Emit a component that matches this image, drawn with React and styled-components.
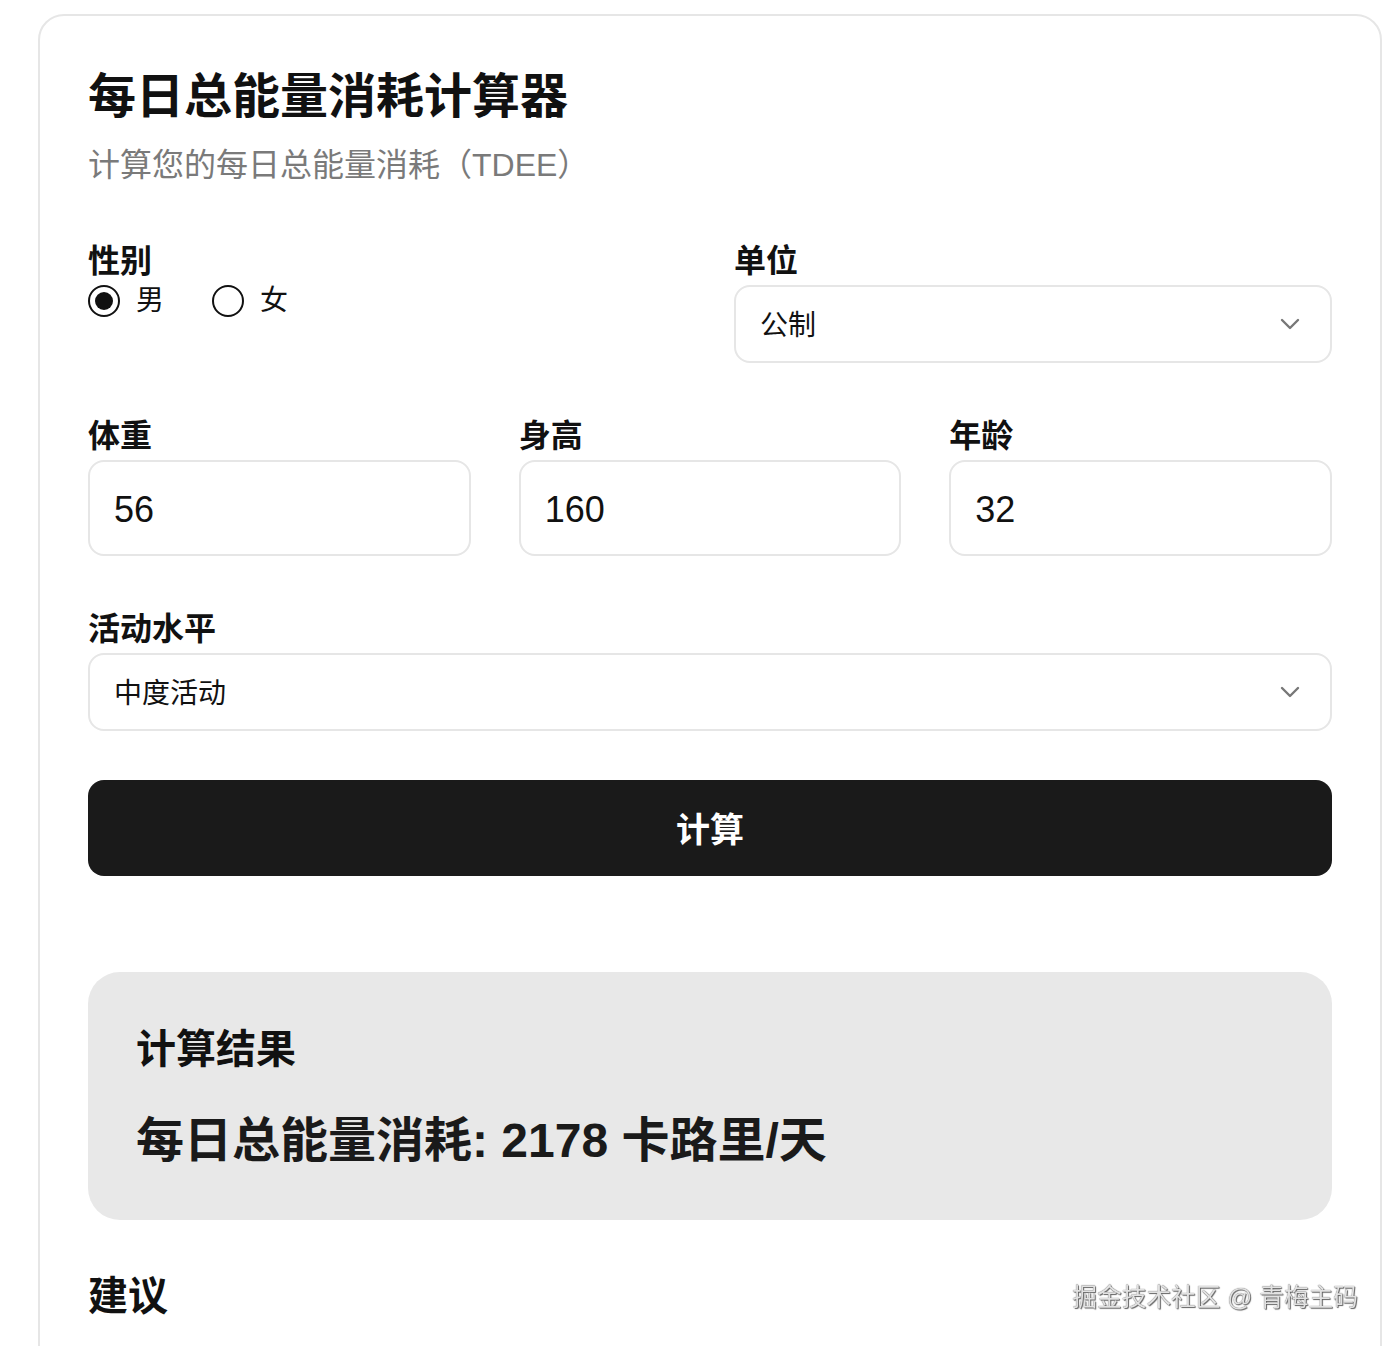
import React, { useState } from "react";
import styled, { createGlobalStyle } from "styled-components";

const Global = createGlobalStyle`
  html, body { margin: 0; padding: 0; background: #ffffff; }
  body {
    font-family: "Liberation Sans", "Noto Sans CJK SC", Arial, sans-serif;
    color: #111111;
  }
  * { box-sizing: border-box; }
`;

const Card = styled.div`
  margin: 14px 10px 0 38px;
  border: 2px solid #e6e6e6;
  border-radius: 26px;
  padding: 52px 48px 60px 48px;
  background: #fff;
  display: flex;
  flex-direction: column;
`;

const Title = styled.h1`
  margin: 0;
  font-size: 48px;
  line-height: 1.2;
  font-weight: 700;
  color: #111;
`;

const Subtitle = styled.p`
  margin: 15px 0 0 0;
  font-size: 32px;
  line-height: 48px;
  color: #7a7a7a;
  font-weight: 400;
`;

const Grid = styled.div`
  display: grid;
  grid-template-columns: repeat(${(p) => p.$cols}, 1fr);
  column-gap: 48px;
  margin-top: ${(p) => p.$top}px;
`;

const Field = styled.div`
  display: flex;
  flex-direction: column;
`;

const Label = styled.div`
  font-size: 32px;
  line-height: 48px;
  font-weight: 700;
  color: #111;
`;

const RadioRow = styled.div`
  display: flex;
  align-items: center;
  gap: 48px;
  height: 32px;
`;

const RadioItem = styled.label`
  display: flex;
  align-items: center;
  gap: 16px;
  font-size: 28px;
  line-height: 32px;
  color: #111;
  cursor: pointer;
`;

const RadioInput = styled.input`
  appearance: none;
  margin: 0;
  width: 32px;
  height: 32px;
  border: 2px solid #111;
  border-radius: 50%;
  display: grid;
  place-items: center;
  background: #fff;
  &::before {
    content: "";
    width: 18px;
    height: 18px;
    border-radius: 50%;
    background: #111;
    transform: scale(0);
  }
  &:checked::before {
    transform: scale(1);
  }
`;

const SelectWrap = styled.div`
  position: relative;
`;

const Select = styled.select`
  appearance: none;
  width: 100%;
  height: 78px;
  border: 2px solid #e6e6e6;
  border-radius: 16px;
  background: #fff;
  padding: 3px 60px 0 24px;
  font-family: inherit;
  font-size: 28px;
  color: #111;
  outline: none;
`;

const Chevron = styled.svg`
  position: absolute;
  right: 32px;
  top: 50%;
  transform: translateY(-50%);
  pointer-events: none;
`;

const Input = styled.input`
  width: 100%;
  height: 96px;
  border: 2px solid #e6e6e6;
  border-radius: 16px;
  padding: 4px 24px 0 24px;
  font-family: inherit;
  font-size: 36px;
  color: #111;
  background: #fff;
  outline: none;
`;

const Button = styled.button`
  margin-top: 49px;
  height: 96px;
  width: 100%;
  border: none;
  border-radius: 16px;
  background: #1a1a1a;
  color: #fff;
  font-family: inherit;
  font-size: 34px;
  font-weight: 700;
  cursor: pointer;
`;

const Result = styled.div`
  margin-top: 96px;
  background: #e8e8e8;
  border-radius: 32px;
  padding: 47px 48px 51px 48px;
`;

const ResultHeading = styled.h2`
  margin: 0;
  font-size: 40px;
  line-height: 60px;
  font-weight: 700;
  color: #111;
`;

const ResultValue = styled.div`
  margin-top: 33px;
  font-size: 48px;
  line-height: 1.2;
  font-weight: 700;
  color: #1a1a1a;
`;

const Section = styled.h2`
  margin: 46px 0 0 0;
  font-size: 40px;
  line-height: 60px;
  font-weight: 700;
  color: #111;
`;

const Watermark = styled.div`
  position: fixed;
  right: 34px;
  bottom: 35px;
  font-size: 24.7px;
  line-height: 1;
  color: #e2e2e2;
  text-shadow: 0 0 1px #444, 1px 1px 1px #666;
  pointer-events: none;
`;

const ChevronIcon = () => (
  <Chevron width="20" height="12" viewBox="0 0 20 12" fill="none">
    <path d="M2 2l8 8 8-8" stroke="#777" strokeWidth="2.4" strokeLinecap="round" strokeLinejoin="round" />
  </Chevron>
);

export default function App() {
  const [gender, setGender] = useState("male");
  const [unit, setUnit] = useState("metric");
  const [weight, setWeight] = useState("56");
  const [height, setHeight] = useState("160");
  const [age, setAge] = useState("32");
  const [activity, setActivity] = useState("moderate");

  return (
    <>
      <Global />
      <Card>
        <Title>每日总能量消耗计算器</Title>
        <Subtitle>计算您的每日总能量消耗（TDEE）</Subtitle>

        <Grid $cols={2} $top={48}>
          <Field>
            <Label>性别</Label>
            <RadioRow>
              <RadioItem>
                <RadioInput
                  type="radio"
                  name="gender"
                  checked={gender === "male"}
                  onChange={() => setGender("male")}
                />
                男
              </RadioItem>
              <RadioItem>
                <RadioInput
                  type="radio"
                  name="gender"
                  checked={gender === "female"}
                  onChange={() => setGender("female")}
                />
                女
              </RadioItem>
            </RadioRow>
          </Field>
          <Field>
            <Label>单位</Label>
            <SelectWrap>
              <Select value={unit} onChange={(e) => setUnit(e.target.value)}>
                <option value="metric">公制</option>
                <option value="imperial">英制</option>
              </Select>
              <ChevronIcon />
            </SelectWrap>
          </Field>
        </Grid>

        <Grid $cols={3} $top={49}>
          <Field>
            <Label>体重</Label>
            <Input value={weight} onChange={(e) => setWeight(e.target.value)} />
          </Field>
          <Field>
            <Label>身高</Label>
            <Input value={height} onChange={(e) => setHeight(e.target.value)} />
          </Field>
          <Field>
            <Label>年龄</Label>
            <Input value={age} onChange={(e) => setAge(e.target.value)} />
          </Field>
        </Grid>

        <Grid $cols={1} $top={49}>
          <Field>
            <Label>活动水平</Label>
            <SelectWrap>
              <Select value={activity} onChange={(e) => setActivity(e.target.value)}>
                <option value="sedentary">久坐不动</option>
                <option value="light">轻度活动</option>
                <option value="moderate">中度活动</option>
                <option value="active">高度活动</option>
                <option value="very">极高活动</option>
              </Select>
              <ChevronIcon />
            </SelectWrap>
          </Field>
        </Grid>

        <Button type="button">计算</Button>

        <Result>
          <ResultHeading>计算结果</ResultHeading>
          <ResultValue>每日总能量消耗: 2178 卡路里/天</ResultValue>
        </Result>

        <Section>建议</Section>
      </Card>
      <Watermark>掘金技术社区 @ 青梅主码</Watermark>
    </>
  );
}
